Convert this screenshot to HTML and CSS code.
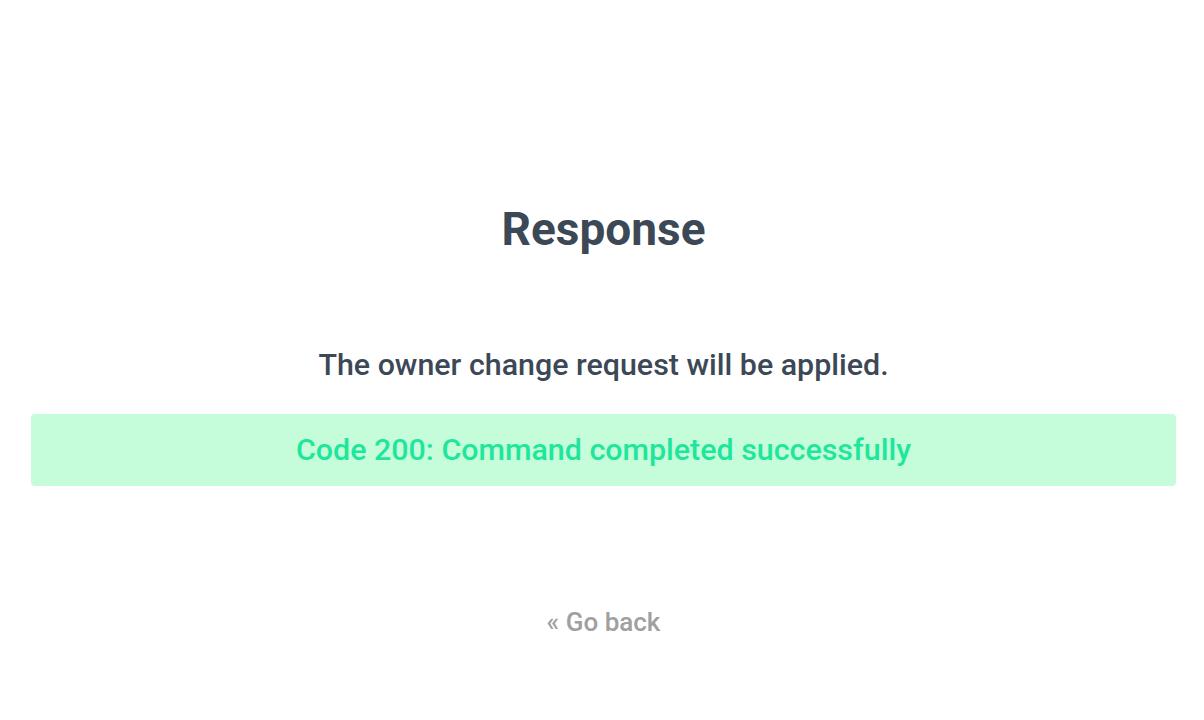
FILE: index.html
```html
<html>
<head>
   <meta charset="utf-8">
   <link rel="stylesheet" href="styles.css">
</head>
<body>
   <div class="page">
      <h1 class="title">Response</h1>
      <p class="message">The owner change request will be applied.</p>
      <div class="status-ok">Code 200: Command completed successfully</div>
      <a class="back-link" href="#">&laquo; Go back</a>
   </div>
</body>
</html>
```

FILE: styles.css
```css
body {
   margin: 0;
   background-color: #ffffff;
   font-family: Roboto, "Noto Sans", sans-serif;
   color: #3c4856;
}
.page {
   display: flex;
   flex-direction: column;
   align-items: center;
   padding: 200px 28px 0 31px;
}
.title {
   margin: 0;
   font-size: 46px;
   font-weight: 700;
   line-height: 58px;
}
.message {
   margin: 87px 0 0 0;
   font-size: 30.4px;
   font-weight: 500;
   line-height: 40px;
}
.status-ok {
   align-self: stretch;
   margin-top: 29px;
   height: 72px;
   line-height: 72px;
   border-radius: 4px;
   background-color: #c5fcd9;
   color: #1ee79c;
   text-align: center;
   font-size: 30.4px;
   font-weight: 500;
}
.back-link {
   margin-top: 121px;
   font-size: 26px;
   line-height: 30px;
   font-weight: 500;
   color: #a0a0a0;
   text-decoration: none;
}
```
